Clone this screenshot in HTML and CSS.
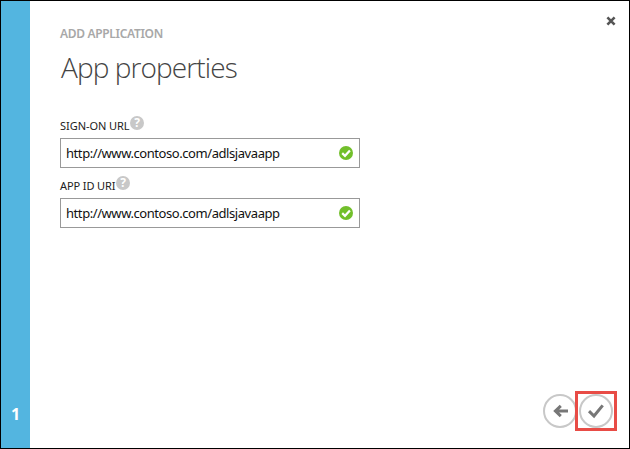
FILE: index.html
```html
<!DOCTYPE html>
<html lang="en">
<head>
<meta charset="utf-8">
<title>Add application</title>
<link rel="stylesheet" href="styles.css">
</head>
<body>
<div class="dialog">
  <aside class="steps"><span class="step">1</span></aside>
  <main class="content">
    <header class="header">
      <div>
        <p class="eyebrow">ADD APPLICATION</p>
        <h1 class="title">App properties</h1>
      </div>
      <svg class="close" width="10" height="10" viewBox="0 0 10 10"><path d="M1.4 1.4 8.6 8.6M8.6 1.4 1.4 8.6"/></svg>
    </header>
    <form class="form">
      <div class="field">
        <div class="label"><span class="label-signon">SIGN-ON URL</span><span class="help">?</span></div>
        <div class="input"><span class="value">http://www.contoso.com/adlsjavaapp</span>
          <svg class="valid" width="14" height="14" viewBox="0 0 14 14"><circle cx="7" cy="7" r="7"/><path d="M3.2 7.1 6 9.8 10.9 4.4"/></svg>
        </div>
      </div>
      <div class="field">
        <div class="label"><span class="label-appid">APP ID URI</span><span class="help">?</span></div>
        <div class="input"><span class="value">http://www.contoso.com/adlsjavaapp</span>
          <svg class="valid" width="14" height="14" viewBox="0 0 14 14"><circle cx="7" cy="7" r="7"/><path d="M3.2 7.1 6 9.8 10.9 4.4"/></svg>
        </div>
      </div>
    </form>
    <footer class="actions">
      <svg class="round" width="34" height="34" viewBox="0 0 34 34"><circle cx="17" cy="17" r="16"/><path d="M12 17H25M17.8 11.8 12.4 17 17.8 22.2"/></svg>
      <div class="highlight">
        <svg class="round" width="34" height="34" viewBox="0 0 34 34"><circle cx="17" cy="17" r="16"/><path d="M10 17.2 15 22 23.7 11.4"/></svg>
      </div>
    </footer>
  </main>
</div>
</body>
</html>
```
FILE: styles.css
```css
* { box-sizing: border-box; }
body { margin: 0; background: #fff; font-family: "Noto Sans", "Open Sans", sans-serif; }
.dialog { display: flex; width: 630px; height: 449px; border: 1px solid #000; }
.steps { width: 29px; background: #53b5e0; display: flex; align-items: flex-end; justify-content: center; padding-bottom: 23px; }
.step { color: #fff; font-size: 16px; font-weight: 700; line-height: 22px; }
.content { flex: 1; display: flex; flex-direction: column; padding: 16px 12px 17px 30px; }
.header { display: flex; justify-content: space-between; height: 101px; }
.eyebrow { margin: 9px 0 0; font-size: 12px; line-height: 16px; font-weight: 600; color: #a8a8a8; letter-spacing: -0.32px; white-space: nowrap; }
.title { margin: 5px 0 0 1px; font-family: "Open Sans", sans-serif; font-size: 28px; line-height: 40px; font-weight: 300; color: #444; letter-spacing: -0.9px; white-space: nowrap; }
.close { margin: -1px 1px 0 0; }
.close path { fill: none; stroke: #555; stroke-width: 2.6; }
.form { display: flex; flex-direction: column; gap: 8px; width: 300px; }
.field { height: 52px; }
.label { display: flex; height: 20px; font-size: 11px; line-height: 16px; color: #222; white-space: nowrap; }
.label-signon { width: 70px; letter-spacing: -0.05px; }
.label-appid { width: 56px; letter-spacing: -0.1px; }
.help { width: 14px; height: 14px; margin-top: -2px; border-radius: 50%; background: #c8c8c8; color: #fff; font-size: 12px; line-height: 14px; font-weight: 700; text-align: center; }
.input { display: flex; align-items: center; justify-content: space-between; height: 30px; padding: 0 6px 0 5px; border: 1px solid #999; }
.value { font-size: 13px; line-height: 18px; color: #111; letter-spacing: -0.43px; white-space: nowrap; }
.valid circle { fill: #72bf2b; }
.valid path { fill: none; stroke: #fff; stroke-width: 2.2; }
.actions { display: flex; align-items: center; justify-content: flex-end; margin-top: auto; }
.highlight { display: flex; align-items: center; justify-content: center; width: 42px; height: 40px; margin-left: -2px; border: 3px solid #e84c46; }
.round { flex: none; }
.round circle { fill: none; stroke: #c8c8c8; stroke-width: 2; }
.round path { fill: none; stroke: #777; stroke-width: 3; }
```
